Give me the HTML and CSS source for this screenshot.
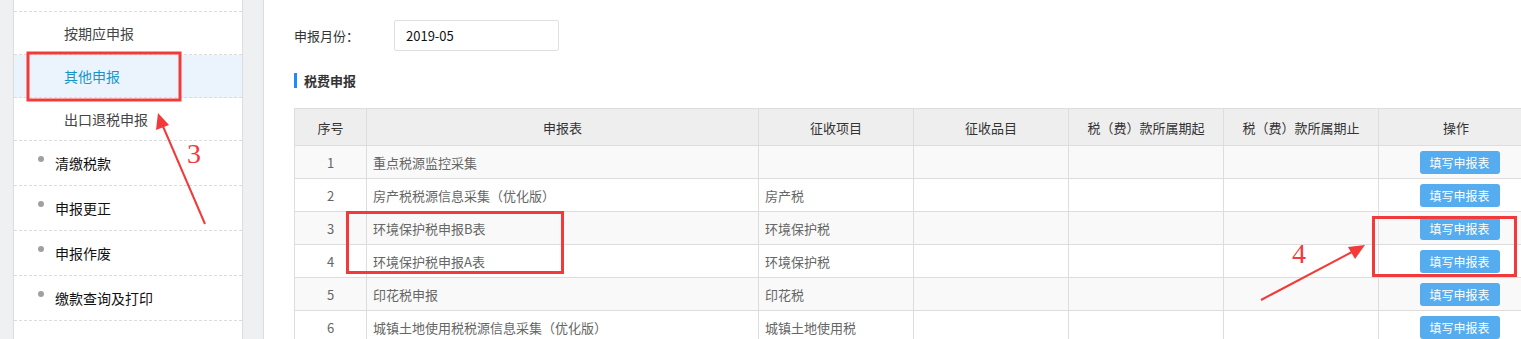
FILE: index.html
```html
<!DOCTYPE html>
<html lang="zh-CN">
<head>
    <meta charset="UTF-8">
    <title>税费申报</title>
    <link rel="stylesheet" href="styles.css">
</head>
<body>
    <div class="page">
        <div class="sidebar">
            <div class="spacer"></div>
            <div class="sub-item">按期应申报</div>
            <div class="sub-item active">其他申报</div>
            <div class="sub-item">出口退税申报</div>
            <div class="menu-item"><span class="dot"></span>清缴税款</div>
            <div class="menu-item"><span class="dot"></span>申报更正</div>
            <div class="menu-item"><span class="dot"></span>申报作废</div>
            <div class="menu-item"><span class="dot"></span>缴款查询及打印</div>
        </div>

        <div class="main">
            <div class="month-row">
                <span class="month-label">申报月份：</span>
                <div class="month-input">2019-05</div>
            </div>

            <h3 class="section-title">税费申报</h3>

            <table class="tax-table">
                <colgroup>
                    <col class="c-no">
                    <col class="c-name">
                    <col class="c-mid"><col class="c-mid"><col class="c-mid"><col class="c-mid"><col class="c-op">
                </colgroup>
                <thead>
                    <tr>
                        <th>序号</th>
                        <th>申报表</th>
                        <th>征收项目</th>
                        <th>征收品目</th>
                        <th>税（费）款所属期起</th>
                        <th>税（费）款所属期止</th>
                        <th>操作</th>
                    </tr>
                </thead>
                <tbody>
                    <tr>
                        <td class="num">1</td><td>重点税源监控采集</td><td></td><td></td><td></td><td></td>
                        <td class="op"><button class="fill-btn">填写申报表</button></td>
                    </tr>
                    <tr>
                        <td class="num">2</td><td>房产税税源信息采集（优化版）</td><td>房产税</td><td></td><td></td><td></td>
                        <td class="op"><button class="fill-btn">填写申报表</button></td>
                    </tr>
                    <tr>
                        <td class="num">3</td><td>环境保护税申报B表</td><td>环境保护税</td><td></td><td></td><td></td>
                        <td class="op"><button class="fill-btn">填写申报表</button></td>
                    </tr>
                    <tr>
                        <td class="num">4</td><td>环境保护税申报A表</td><td>环境保护税</td><td></td><td></td><td></td>
                        <td class="op"><button class="fill-btn">填写申报表</button></td>
                    </tr>
                    <tr>
                        <td class="num">5</td><td>印花税申报</td><td>印花税</td><td></td><td></td><td></td>
                        <td class="op"><button class="fill-btn">填写申报表</button></td>
                    </tr>
                    <tr>
                        <td class="num">6</td><td>城镇土地使用税税源信息采集（优化版）</td><td>城镇土地使用税</td><td></td><td></td><td></td>
                        <td class="op"><button class="fill-btn">填写申报表</button></td>
                    </tr>
                </tbody>
            </table>
        </div>
    </div>

    <!-- red annotation marks drawn over the screenshot -->
    <svg class="marks" width="1521" height="339" viewBox="0 0 1521 339">
        <g fill="none" stroke="#f23a3a" stroke-width="3">
            <rect x="28" y="53" width="152" height="47"/>
            <rect x="347.5" y="212.5" width="215" height="60"/>
            <rect x="1373.5" y="217.5" width="142" height="58"/>
        </g>
        <g stroke="#f23a3a" stroke-width="2" fill="#f23a3a">
            <line x1="205" y1="224" x2="162" y2="124"/>
            <polygon points="158,113 169,125 156,130" stroke="none"/>
            <line x1="1261" y1="300" x2="1352" y2="252"/>
            <polygon points="1365,245 1355,259 1348,247" stroke="none"/>
        </g>
        <text x="187" y="163" class="mark-num">3</text>
        <text x="1292" y="263" class="mark-num">4</text>
    </svg>
</body>
</html>
```

FILE: styles.css
```css
body {
    margin: 0;
    padding: 0;
    background: #eff0f2;
    font-family: "Noto Sans CJK SC", "Liberation Sans", sans-serif;
    color: #333;
    overflow: hidden;
    position: relative;
    width: 1521px;
    height: 339px;
}

.page {
    display: flex;
    gap: 20px;
    padding-left: 13px;
    height: 339px;
}

.sidebar {
    width: 228px;
    flex-shrink: 0;
    background: #fff;
    border-left: 1px solid #dcdde0;
    border-right: 1px solid #dcdde0;
}

.spacer {
    height: 11px;
    border-bottom: 1px dashed #dcdcdc;
}

.sub-item, .menu-item {
    display: flex;
    align-items: center;
    font-size: 14px;
    border-bottom: 1px dashed #dcdcdc;
}

.sub-item {
    height: 42px;
    padding-left: 50px;
    color: #444;
}

.sub-item.active {
    background: #ebf4fc;
    color: #1596c9;
}

.menu-item {
    height: 44px;
    padding-left: 24px;
    color: #111;
}

.dot {
    width: 6px;
    height: 6px;
    border-radius: 50%;
    background: #a0a0a0;
    margin-right: 11px;
    margin-top: -8px;
}

.main {
    flex: 1;
    background: #fff;
    border-left: 1px solid #dcdde0;
    padding: 20px 0 0 30px;
    overflow: hidden;
}

.month-row {
    display: flex;
    align-items: center;
    height: 31px;
}

.month-label {
    font-size: 13px;
    color: #333;
    width: 100px;
}

.month-input {
    width: 152px;
    height: 29px;
    border: 1px solid #e0e0e0;
    border-radius: 2px;
    padding-left: 11px;
    font-size: 13px;
    line-height: 29px;
    color: #111;
}

.section-title {
    margin: 22px 0 0 0;
    height: 15px;
    border-left: 3px solid #1a8cff;
    padding-left: 7px;
    font-size: 13px;
    font-weight: bold;
    line-height: 15px;
    color: #333;
}

.tax-table {
    margin-top: 20px;
    border-collapse: collapse;
    table-layout: fixed;
    width: 1247px;
    font-size: 13px;
}

.c-no { width: 72px; }
.c-name { width: 392px; }
.c-mid { width: 155px; }
.c-op { width: 162px; }

.tax-table th, .tax-table td {
    border: 1px solid #dddddd;
    padding: 0 6px;
    white-space: nowrap;
    overflow: hidden;
}

.tax-table th {
    height: 36px;
    background: #eeeeee;
    font-weight: normal;
    color: #333;
    text-align: center;
}

.tax-table td {
    height: 32px;
    color: #666;
}

.tax-table tbody tr:nth-child(odd) td {
    background: #f9f9f9;
}

.tax-table td.num, .tax-table td.op {
    text-align: center;
}

.tax-table th:last-child {
    padding-right: 13px;
}

.fill-btn {
    width: 80px;
    height: 23px;
    border: none;
    border-radius: 3px;
    background: #55acee;
    color: #fff;
    font-family: inherit;
    font-size: 12px;
    padding: 0;
    vertical-align: middle;
}

.marks {
    position: absolute;
    top: 0;
    left: 0;
    pointer-events: none;
}

.mark-num {
    font-family: "Liberation Serif", serif;
    font-size: 28px;
    fill: #f23a3a;
}
```
